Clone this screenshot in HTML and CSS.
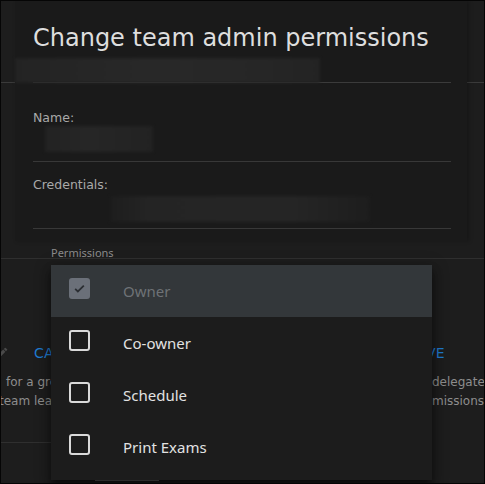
FILE: index.html
```html
<!DOCTYPE html>
<html lang="en">

<head>
    <meta charset="UTF-8" />
    <meta name="viewport" content="width=device-width, initial-scale=1.0" />
    <title>Change team admin permissions</title>
    <link rel="stylesheet" href="styles.css">
</head>

<body>
    <div class="screen">
        <!-- page behind the dialog -->
        <div class="page">
            <div class="topbar"></div>
            <div class="page-body"></div>
            <div class="team-section">
                <div class="actions">
                    <svg class="pencil" width="14" height="14" viewBox="0 0 24 24">
                        <path d="M3 17.25V21h3.75L17.81 9.94l-3.75-3.75L3 17.25zM20.71 7.04a1 1 0 0 0 0-1.41l-2.34-2.34a1 1 0 0 0-1.41 0l-1.83 1.83 3.75 3.75 1.83-1.83z" fill="#4a4a4a" />
                    </svg>
                    <span class="btn-text">CANCEL</span>
                    <span class="btn-text">SAVE</span>
                </div>
                <div class="hint">
                    <div class="hint-line first"><span>for a group</span><span></span><span>delegate</span></div>
                    <div class="hint-line second"><span>team leaders</span><span></span><span>missions</span></div>
                </div>
                <div class="short-rule"></div>
                <div class="bottom-bar"></div>
            </div>
        </div>

        <!-- dialog -->
        <div class="dialog">
            <div class="dialog-header">
                <h1>Change team admin permissions</h1>
                <div class="redacted wide"></div>
            </div>
            <div class="field name-field">
                <label>Name:</label>
                <div class="redacted name"></div>
            </div>
            <div class="field cred-field">
                <label>Credentials:</label>
                <div class="redacted cred"></div>
            </div>
        </div>

        <!-- open select menu -->
        <div class="select">
            <div class="select-label">Permissions</div>
            <ul class="menu">
                <li class="menu-item disabled"><span class="box checked">
                        <svg width="13" height="13" viewBox="0 0 24 24">
                            <path d="M4 12.5l5 5L20 6.5" fill="none" stroke="#2b2e33" stroke-width="3.2" />
                        </svg></span>Owner</li>
                <li class="menu-item"><span class="box"></span>Co-owner</li>
                <li class="menu-item"><span class="box"></span>Schedule</li>
                <li class="menu-item"><span class="box"></span>Print Exams</li>
            </ul>
        </div>
    </div>
</body>

</html>
```

FILE: styles.css
```css
* {
    box-sizing: border-box;
}

body {
    margin: 0;
    background: #1c1c1c;
    font-family: "DejaVu Sans", sans-serif;
}

.screen {
    position: relative;
    width: 485px;
    height: 484px;
    border: 1px solid #050505;
    background: #1d1d1d;
    overflow: hidden;
}

/* background page */
.topbar {
    height: 82px;
    border-bottom: 1px solid #3a3a3a;
}

.page-body {
    height: 175px;
}

.team-section {
    border-top: 1px solid #2f2f2f;
}

.actions {
    display: flex;
    align-items: center;
    gap: 12px;
    padding: 84px 39px 0 0;
    height: 104px;
    font-size: 14px;
    line-height: 20px;
}

.pencil {
    margin-left: -6px;
    margin-right: 13px;
    flex: none;
}

.btn-text {
    color: #1f7ad0;
    letter-spacing: 0.3px;
}

.btn-text:last-child {
    margin-left: auto;
}

.hint {
    margin-top: 10px;
    font-size: 12px;
    line-height: 19px;
    color: #8d8d8d;
    white-space: nowrap;
}

.hint-line {
    display: grid;
    grid-template-columns: 50px 381px 80px;
}

.hint-line span {
    overflow: hidden;
}

.hint-line.first span:first-child {
    padding-left: 5px;
}

.hint-line.second span:first-child {
    margin-left: -2px;
}

.short-rule {
    width: 51px;
    margin-top: 31px;
    border-top: 1px solid #2f2f2f;
}

.bottom-bar {
    width: 64px;
    height: 2px;
    margin: 36px 0 0 94px;
    background: #6c6c6c;
}

/* dialog */
.dialog {
    position: absolute;
    top: 0;
    left: 14px;
    width: 452px;
    height: 240px;
    background: #1a1a1a;
    box-shadow: 2px 0 4px rgba(0, 0, 0, 0.25);
}

.dialog-header {
    margin: 0 16px 0 18px;
    border-bottom: 1px solid #3b3b3b;
}

.dialog-header h1 {
    margin: 0;
    padding-top: 22px;
    font-size: 24px;
    font-weight: normal;
    line-height: 30px;
    color: #dedede;
}

.redacted {
    position: relative;
    filter: blur(1.5px);
}

.redacted.wide {
    margin: 5px 0 -1px -18px;
    width: 305px;
    height: 25px;
    background: linear-gradient(90deg, #232323, #282828 45%, #262626 80%, #232323);
}

.field {
    margin: 0 16px 0 18px;
    border-bottom: 1px solid #383838;
}

.field label {
    display: block;
    font-size: 12.5px;
    line-height: 16px;
    color: #a9a9a9;
}

.name-field {
    padding: 27px 0 9px;
}

.redacted.name {
    margin-left: 12px;
    width: 108px;
    height: 26px;
    background: linear-gradient(90deg, #222, #262626 40%, #222);
}

.cred-field {
    padding: 15px 0 6px;
}

.redacted.cred {
    margin: 3px 0 0 77px;
    width: 260px;
    height: 26px;
    background: linear-gradient(90deg, #1d1d1d, #242424 15%, #252525 70%, #1d1d1d);
}

/* select menu */
.select {
    position: absolute;
    top: 245px;
    left: 50px;
    width: 381px;
    font-family: "Noto Sans", sans-serif;
}

.select-label {
    font-size: 11px;
    line-height: 14px;
    color: #8a8a8a;
    margin-bottom: 5px;
}

.menu {
    list-style: none;
    margin: 0;
    padding: 0 0 7px;
    background: #1c1c1c;
    box-shadow: 0 5px 5px -3px rgba(0, 0, 0, 0.4), 0 8px 10px 1px rgba(0, 0, 0, 0.3), 0 3px 14px 2px rgba(0, 0, 0, 0.25);
}

.menu-item {
    display: flex;
    align-items: center;
    height: 52px;
    padding-left: 18px;
    font-size: 15px;
    color: #e2e2e2;
}

.menu-item.disabled {
    background: #33373a;
    color: #6e7276;
}

.box {
    display: flex;
    align-items: center;
    justify-content: center;
    width: 21px;
    height: 21px;
    margin: 0 33px 5px 0;
    border: 2px solid #d9d9d9;
    border-radius: 3px;
    flex: none;
}

.box.checked {
    border: none;
    background: #6b7079;
}
```
